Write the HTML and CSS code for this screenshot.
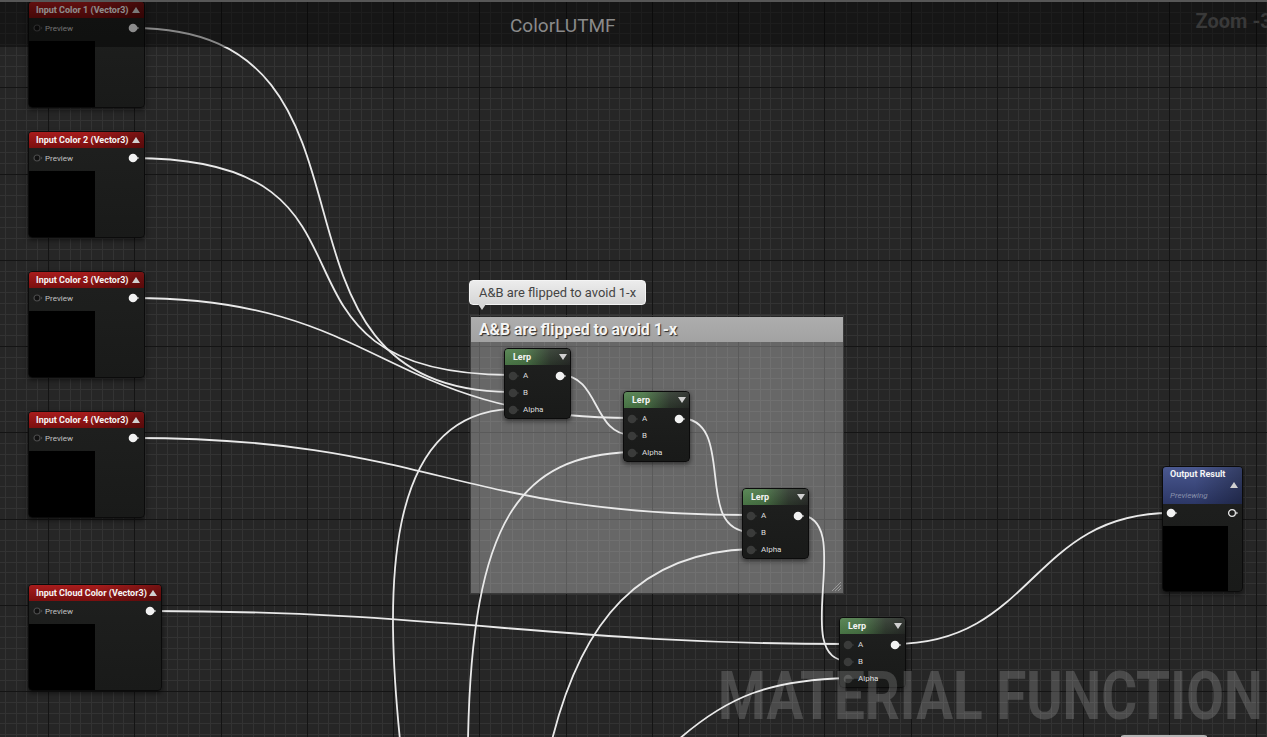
FILE: index.html
```html
<!DOCTYPE html>
<html>
<head>
<meta charset="utf-8">
<link rel="stylesheet" href="styles.css">
</head>
<body>
<div class="graph">
  <svg class="grid" width="1267" height="737">
    <rect width="1267" height="737" fill="#262626"/>
    <path id="grid-minor" d="" stroke="#333333" stroke-width="1" fill="none"/>
    <path id="grid-major" d="" stroke="#141414" stroke-width="1" fill="none"/>
  </svg>

  <div class="comment">
    <div class="comment-hdr">A&amp;B are flipped to avoid 1-x</div>
    <div class="comment-body">
      <svg class="grip" width="12" height="12" viewBox="0 0 12 12"><path d="M11 2L2 11M11 5L5 11M11 8L8 11" stroke="#9a9a9a" stroke-width="1"/></svg>
    </div>
  </div>

  <div class="tooltip">A&amp;B are flipped to avoid 1-x</div>

  <svg class="wires" width="1267" height="737" fill="none" stroke="#e9e9e9" stroke-width="1.8">
    <path d="M133 28C413 28 233 392 513 392"/>
    <path d="M133 158C413 158 233 375 513 375"/>
    <path d="M133 298C383 298 382 418 632 418"/>
    <path d="M133 438C433 438 451 515 751 515"/>
    <path d="M150 611C450 611 548 644 848 644"/>
    <path d="M560 375C600 375 592 435 632 435"/>
    <path d="M679 418C739 418 691 532 751 532"/>
    <path d="M798 515C858 515 788 661 848 661"/>
    <path d="M894 644C1034 644 1031 513 1171 513"/>
    <path d="M400 740C386 600 380 412 513 409"/>
    <path d="M468 740C472 520 520 455 632 452"/>
    <path d="M552 740C582 620 640 552 751 549"/>
    <path d="M678 740C728 696 770 680 848 678"/>
  </svg>

  <div class="node param n-c1">
    <div class="hdr red"><span class="ttl">Input Color 1 (Vector3)</span><span class="tri-up"></span></div>
    <div class="row"><svg class="pin" viewBox="0 0 12 10"><circle cx="5" cy="5" r="3" fill="#121212" stroke="#4a4a4a" stroke-width="1.2"/><path d="M9 3.5L10.5 5L9 6.5Z" fill="#4a4a4a"/></svg><span class="lbl">Preview</span><svg class="pin" viewBox="0 0 12 10"><circle cx="5" cy="5" r="4.3" fill="#f2f2f2"/><path d="M9.3 3.6L11 5L9.3 6.4Z" fill="#f2f2f2"/></svg></div>
    <div class="preview"></div>
  </div>

  <div class="node param n-c2">
    <div class="hdr red"><span class="ttl">Input Color 2 (Vector3)</span><span class="tri-up"></span></div>
    <div class="row"><svg class="pin" viewBox="0 0 12 10"><circle cx="5" cy="5" r="3" fill="#121212" stroke="#4a4a4a" stroke-width="1.2"/><path d="M9 3.5L10.5 5L9 6.5Z" fill="#4a4a4a"/></svg><span class="lbl">Preview</span><svg class="pin" viewBox="0 0 12 10"><circle cx="5" cy="5" r="4.3" fill="#f2f2f2"/><path d="M9.3 3.6L11 5L9.3 6.4Z" fill="#f2f2f2"/></svg></div>
    <div class="preview"></div>
  </div>

  <div class="node param n-c3">
    <div class="hdr red"><span class="ttl">Input Color 3 (Vector3)</span><span class="tri-up"></span></div>
    <div class="row"><svg class="pin" viewBox="0 0 12 10"><circle cx="5" cy="5" r="3" fill="#121212" stroke="#4a4a4a" stroke-width="1.2"/><path d="M9 3.5L10.5 5L9 6.5Z" fill="#4a4a4a"/></svg><span class="lbl">Preview</span><svg class="pin" viewBox="0 0 12 10"><circle cx="5" cy="5" r="4.3" fill="#f2f2f2"/><path d="M9.3 3.6L11 5L9.3 6.4Z" fill="#f2f2f2"/></svg></div>
    <div class="preview"></div>
  </div>

  <div class="node param n-c4">
    <div class="hdr red"><span class="ttl">Input Color 4 (Vector3)</span><span class="tri-up"></span></div>
    <div class="row"><svg class="pin" viewBox="0 0 12 10"><circle cx="5" cy="5" r="3" fill="#121212" stroke="#4a4a4a" stroke-width="1.2"/><path d="M9 3.5L10.5 5L9 6.5Z" fill="#4a4a4a"/></svg><span class="lbl">Preview</span><svg class="pin" viewBox="0 0 12 10"><circle cx="5" cy="5" r="4.3" fill="#f2f2f2"/><path d="M9.3 3.6L11 5L9.3 6.4Z" fill="#f2f2f2"/></svg></div>
    <div class="preview"></div>
  </div>

  <div class="node param n-cloud">
    <div class="hdr red"><span class="ttl">Input Cloud Color (Vector3)</span><span class="tri-up"></span></div>
    <div class="row"><svg class="pin" viewBox="0 0 12 10"><circle cx="5" cy="5" r="3" fill="#121212" stroke="#4a4a4a" stroke-width="1.2"/><path d="M9 3.5L10.5 5L9 6.5Z" fill="#4a4a4a"/></svg><span class="lbl">Preview</span><svg class="pin" viewBox="0 0 12 10"><circle cx="5" cy="5" r="4.3" fill="#f2f2f2"/><path d="M9.3 3.6L11 5L9.3 6.4Z" fill="#f2f2f2"/></svg></div>
    <div class="preview"></div>
  </div>

  <div class="node lerp n-l1">
    <div class="hdr green"><span class="ttl">Lerp</span><span class="tri-down"></span></div>
    <div class="lrows">
      <div class="lrow"><svg class="pin" viewBox="0 0 12 10"><circle cx="5" cy="5" r="4.3" fill="#3a3b3a"/><path d="M9.3 3.6L11 5L9.3 6.4Z" fill="#3a3b3a"/></svg><span class="lbl">A</span><svg class="pin" viewBox="0 0 12 10"><circle cx="5" cy="5" r="4.3" fill="#f2f2f2"/><path d="M9.3 3.6L11 5L9.3 6.4Z" fill="#f2f2f2"/></svg></div>
      <div class="lrow"><svg class="pin" viewBox="0 0 12 10"><circle cx="5" cy="5" r="4.3" fill="#3a3b3a"/><path d="M9.3 3.6L11 5L9.3 6.4Z" fill="#3a3b3a"/></svg><span class="lbl">B</span></div>
      <div class="lrow"><svg class="pin" viewBox="0 0 12 10"><circle cx="5" cy="5" r="4.3" fill="#3a3b3a"/><path d="M9.3 3.6L11 5L9.3 6.4Z" fill="#3a3b3a"/></svg><span class="lbl">Alpha</span></div>
    </div>
  </div>

  <div class="node lerp n-l2">
    <div class="hdr green"><span class="ttl">Lerp</span><span class="tri-down"></span></div>
    <div class="lrows">
      <div class="lrow"><svg class="pin" viewBox="0 0 12 10"><circle cx="5" cy="5" r="4.3" fill="#3a3b3a"/><path d="M9.3 3.6L11 5L9.3 6.4Z" fill="#3a3b3a"/></svg><span class="lbl">A</span><svg class="pin" viewBox="0 0 12 10"><circle cx="5" cy="5" r="4.3" fill="#f2f2f2"/><path d="M9.3 3.6L11 5L9.3 6.4Z" fill="#f2f2f2"/></svg></div>
      <div class="lrow"><svg class="pin" viewBox="0 0 12 10"><circle cx="5" cy="5" r="4.3" fill="#3a3b3a"/><path d="M9.3 3.6L11 5L9.3 6.4Z" fill="#3a3b3a"/></svg><span class="lbl">B</span></div>
      <div class="lrow"><svg class="pin" viewBox="0 0 12 10"><circle cx="5" cy="5" r="4.3" fill="#3a3b3a"/><path d="M9.3 3.6L11 5L9.3 6.4Z" fill="#3a3b3a"/></svg><span class="lbl">Alpha</span></div>
    </div>
  </div>

  <div class="node lerp n-l3">
    <div class="hdr green"><span class="ttl">Lerp</span><span class="tri-down"></span></div>
    <div class="lrows">
      <div class="lrow"><svg class="pin" viewBox="0 0 12 10"><circle cx="5" cy="5" r="4.3" fill="#3a3b3a"/><path d="M9.3 3.6L11 5L9.3 6.4Z" fill="#3a3b3a"/></svg><span class="lbl">A</span><svg class="pin" viewBox="0 0 12 10"><circle cx="5" cy="5" r="4.3" fill="#f2f2f2"/><path d="M9.3 3.6L11 5L9.3 6.4Z" fill="#f2f2f2"/></svg></div>
      <div class="lrow"><svg class="pin" viewBox="0 0 12 10"><circle cx="5" cy="5" r="4.3" fill="#3a3b3a"/><path d="M9.3 3.6L11 5L9.3 6.4Z" fill="#3a3b3a"/></svg><span class="lbl">B</span></div>
      <div class="lrow"><svg class="pin" viewBox="0 0 12 10"><circle cx="5" cy="5" r="4.3" fill="#3a3b3a"/><path d="M9.3 3.6L11 5L9.3 6.4Z" fill="#3a3b3a"/></svg><span class="lbl">Alpha</span></div>
    </div>
  </div>

  <div class="node lerp n-l4">
    <div class="hdr green"><span class="ttl">Lerp</span><span class="tri-down"></span></div>
    <div class="lrows">
      <div class="lrow"><svg class="pin" viewBox="0 0 12 10"><circle cx="5" cy="5" r="4.3" fill="#3a3b3a"/><path d="M9.3 3.6L11 5L9.3 6.4Z" fill="#3a3b3a"/></svg><span class="lbl">A</span><svg class="pin" viewBox="0 0 12 10"><circle cx="5" cy="5" r="4.3" fill="#f2f2f2"/><path d="M9.3 3.6L11 5L9.3 6.4Z" fill="#f2f2f2"/></svg></div>
      <div class="lrow"><svg class="pin" viewBox="0 0 12 10"><circle cx="5" cy="5" r="4.3" fill="#3a3b3a"/><path d="M9.3 3.6L11 5L9.3 6.4Z" fill="#3a3b3a"/></svg><span class="lbl">B</span></div>
      <div class="lrow"><svg class="pin" viewBox="0 0 12 10"><circle cx="5" cy="5" r="4.3" fill="#3a3b3a"/><path d="M9.3 3.6L11 5L9.3 6.4Z" fill="#3a3b3a"/></svg><span class="lbl">Alpha</span></div>
    </div>
  </div>

  <div class="node result n-out">
    <div class="hdr blue">
      <div class="hdr-top"><span class="ttl">Output Result</span></div>
      <div class="hdr-mid"><span class="tri-up"></span></div>
      <div class="sub">Previewing</div>
    </div>
    <div class="orow"><svg class="pin" viewBox="0 0 12 10"><circle cx="5" cy="5" r="4.3" fill="#f2f2f2"/><path d="M9.3 3.6L11 5L9.3 6.4Z" fill="#f2f2f2"/></svg><svg class="pin" viewBox="0 0 12 10"><circle cx="5" cy="5" r="3.4" fill="none" stroke="#e6e6e6" stroke-width="1.3"/><path d="M9.3 3.6L11 5L9.3 6.4Z" fill="#e6e6e6"/></svg></div>
    <div class="preview"></div>
  </div>

  <div class="node stub"></div>

  <div class="watermark">MATERIAL FUNCTION</div>

  <div class="topbar">
    <span class="title">ColorLUTMF</span>
    <span class="zoom">Zoom -3</span>
  </div>
</div>
<script src="grid.js"></script>
</body>
</html>
```

FILE: grid.js
```js
(function () {
  var W = 1267, H = 737;
  var major = 86.25, minor = major / 8;
  var ox = 48, oy = 1;
  var dMinor = "", dMajor = "";
  var k, p;
  for (k = -8; k < 200; k++) {
    p = Math.round(ox + k * minor);
    if (p < 0) continue;
    if (p > W) break;
    if (((k % 8) + 8) % 8 === 0) dMajor += "M" + (p + 0.5) + " 0V" + H;
    else dMinor += "M" + (p + 0.5) + " 0V" + H;
  }
  for (k = -8; k < 200; k++) {
    p = Math.round(oy + k * minor);
    if (p < 0) continue;
    if (p > H) break;
    if (((k % 8) + 8) % 8 === 0) dMajor += "M0 " + (p + 0.5) + "H" + W;
    else dMinor += "M0 " + (p + 0.5) + "H" + W;
  }
  document.getElementById("grid-minor").setAttribute("d", dMinor);
  document.getElementById("grid-major").setAttribute("d", dMajor);
})();
```

FILE: styles.css
```css
* { box-sizing: border-box; }
html, body {
  margin: 0;
  padding: 0;
  width: 1267px;
  height: 737px;
  overflow: hidden;
  background: #262626;
  font-family: Roboto, "Liberation Sans", sans-serif;
}
.graph {
  position: relative;
  width: 1267px;
  height: 737px;
  overflow: hidden;
}
.grid, .wires {
  position: absolute;
  left: 0;
  top: 0;
}

/* comment box */
.comment {
  position: absolute;
  left: 470px;
  top: 315px;
  width: 374px;
  height: 279px;
  border: 1px solid #3a3a3a;
  display: flex;
  flex-direction: column;
}
.comment-hdr {
  height: 25px;
  margin: 1px 0 0;
  background: linear-gradient(#adadad, #a2a2a2);
  color: #f4f4f4;
  font-weight: 700;
  font-size: 15.8px;
  line-height: 25px;
  padding-left: 8px;
  text-shadow: 1px 1px 1px rgba(0,0,0,0.75);
  white-space: nowrap;
}
.comment-body {
  flex: 1;
  position: relative;
  background: rgba(255,255,255,0.3);
}
.grip {
  position: absolute;
  right: 1px;
  bottom: 1px;
}

/* tooltip */
.tooltip {
  position: absolute;
  left: 469px;
  top: 280px;
  width: 177px;
  height: 25px;
  border-radius: 4px;
  background: linear-gradient(#ececec, #d6d6d6);
  border: 1px solid #f4f4f4;
  color: #444444;
  font-size: 12.9px;
  line-height: 23px;
  padding-left: 9px;
  white-space: nowrap;
}
.tooltip::after {
  content: "";
  position: absolute;
  left: 8px;
  bottom: -6px;
  border-left: 4px solid transparent;
  border-right: 4px solid transparent;
  border-top: 6px solid #d6d6d6;
}

/* nodes */
.node {
  position: absolute;
  background: linear-gradient(#1f201f, #191a19);
  border: 1px solid #0b0b0b;
  border-radius: 4px;
  box-shadow: 0 2px 5px rgba(0,0,0,0.55);
  display: flex;
  flex-direction: column;
  overflow: hidden;
}
.hdr {
  display: flex;
  align-items: center;
  justify-content: space-between;
  color: #f4f4f4;
  font-weight: 700;
  font-size: 9px;
  white-space: nowrap;
}
.ttl { line-height: 1; }
.tri-up {
  width: 0;
  height: 0;
  border-left: 4px solid transparent;
  border-right: 4px solid transparent;
  border-bottom: 6px solid #d0d0d0;
}
.tri-down {
  width: 0;
  height: 0;
  border-left: 4px solid transparent;
  border-right: 4px solid transparent;
  border-top: 6px solid #d0d0d0;
}
.pin {
  width: 12px;
  height: 10px;
  flex: none;
  display: block;
}
.lbl {
  flex: 1;
  white-space: nowrap;
}

/* parameter nodes */
.param { width: 117px; height: 107px; }
.param .hdr {
  height: 16px;
  padding: 0 4px 0 7px;
}
.red {
  background:
    linear-gradient(90deg, rgba(0,0,0,0) 50%, rgba(20,0,0,0.35)),
    linear-gradient(180deg, #a81c1c, #7a0f0f);
}
.row {
  display: flex;
  align-items: center;
  height: 20px;
  padding: 0 4px 0 3px;
  font-size: 8px;
  color: #c2c2c2;
}
.row .lbl { margin-left: 1px; }
.preview {
  width: 66px;
  height: 66px;
  margin-top: 3px;
  background: #000;
}
.n-c1 { left: 28px; top: 1px; }
.n-c2 { left: 28px; top: 131px; }
.n-c3 { left: 28px; top: 271px; }
.n-c4 { left: 28px; top: 411px; }
.n-cloud { left: 28px; top: 584px; width: 134px; }

/* lerp nodes */
.lerp { width: 67px; height: 71px; }
.lerp .hdr {
  height: 16px;
  padding: 0 3px 0 8px;
}
.green {
  background:
    linear-gradient(180deg, rgba(255,255,255,0.08), rgba(0,0,0,0.1)),
    linear-gradient(90deg, #4f7f4b 0%, #4a7646 30%, #2f3a2e 70%, #272a27 100%);
}
.lrows { padding-top: 2px; }
.lrow {
  display: flex;
  align-items: center;
  height: 17px;
  padding: 0 3px;
  font-size: 8px;
  color: #dcdcdc;
}
.lrow .lbl { margin-left: 3px; }
.n-l1 { left: 504px; top: 348px; }
.n-l2 { left: 623px; top: 391px; }
.n-l3 { left: 742px; top: 488px; }
.n-l4 { left: 839px; top: 617px; }

/* output node */
.result { width: 81px; height: 126px; left: 1162px; top: 466px; }
.blue {
  height: 37px;
  flex-direction: column;
  align-items: stretch;
  justify-content: flex-start;
  padding: 2px 4px 0 7px;
  background:
    linear-gradient(90deg, rgba(0,0,0,0) 40%, rgba(0,0,0,0.3)),
    linear-gradient(180deg, #4a5890, #2c3766);
}
.hdr-top { height: 10px; display: flex; align-items: center; }
.hdr-mid { height: 12px; display: flex; justify-content: flex-end; align-items: center; }
.sub {
  font-weight: 400;
  font-style: italic;
  font-size: 8px;
  color: #8890ab;
  line-height: 10px;
}
.orow {
  display: flex;
  align-items: center;
  justify-content: space-between;
  height: 18px;
  padding: 0 3px;
}
.result .preview { width: 65px; height: 65px; margin-top: 4px; }

.stub {
  left: 1120px;
  top: 735px;
  width: 88px;
  height: 20px;
  border-top: 2px solid #b5b5b5;
}

/* overlays */
.watermark {
  position: absolute;
  left: 718px;
  top: 664px;
  font-family: Roboto, "Liberation Sans", sans-serif;
  font-weight: 700;
  font-size: 66px;
  line-height: 66px;
  color: rgba(255,255,255,0.17);
  white-space: nowrap;
  transform: scaleX(0.83);
  transform-origin: 0 0;
  pointer-events: none;
}
.topbar {
  position: absolute;
  left: 0;
  top: 0;
  width: 1267px;
  height: 47px;
  background: rgba(0,0,0,0.42);
  border-top: 2px solid #575757;
  display: flex;
  align-items: center;
  white-space: nowrap;
}
.title {
  margin-left: 510px;
  font-size: 19px;
  color: #8a8a8a;
  margin-top: 1px;
}
.zoom {
  margin-left: 580px;
  font-size: 20px;
  font-weight: 700;
  color: #393939;
  margin-top: -7px;
}
```
